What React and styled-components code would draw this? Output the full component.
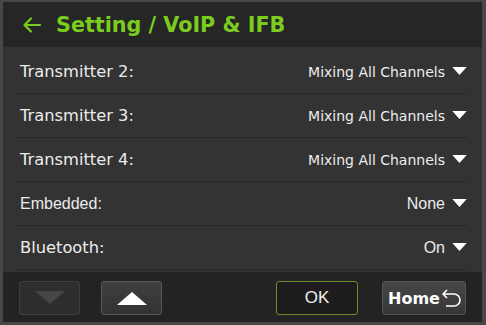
import styled, { createGlobalStyle } from 'styled-components';

const GlobalStyle = createGlobalStyle`
  html, body {
    margin: 0;
    padding: 0;
    background: #444;
  }
`;

const rows = [
  { label: 'Transmitter 2:', value: 'Mixing All Channels', label_kind: 'verdana', value_kind: 'verdana' },
  { label: 'Transmitter 3:', value: 'Mixing All Channels', label_kind: 'verdana', value_kind: 'verdana' },
  { label: 'Transmitter 4:', value: 'Mixing All Channels', label_kind: 'verdana', value_kind: 'verdana' },
  { label: 'Embedded:', value: 'None', label_kind: 'arial', value_kind: 'arial' },
  { label: 'Bluetooth:', value: 'On', label_kind: 'verdana', value_kind: 'arial' },
];

export default function App() {
  return (
    <>
      <GlobalStyle />
      <Screen>
        <Header>
          <BackArrow viewBox="0 0 20 20">
            <path d="M18 10 H3 M9 3.5 L2.5 10 L9 16.5" />
          </BackArrow>
          <Title>Setting / VoIP &amp; IFB</Title>
        </Header>
        <List>
          {rows.map((row) => (
            <Row key={row.label}>
              <Label $kind={row.label_kind}>{row.label}</Label>
              <Value $kind={row.value_kind}>
                {row.value}
                <Caret viewBox="0 0 16 10">
                  <path d="M0 0 H16 L8 9 Z" />
                </Caret>
              </Value>
            </Row>
          ))}
        </List>
        <Footer>
          <ArrowButton $disabled>
            <svg width="30" height="14" viewBox="0 0 30 14">
              <path d="M0 0 H30 L15 13 Z" fill="#464646" />
            </svg>
          </ArrowButton>
          <ArrowButton>
            <svg width="30" height="14" viewBox="0 0 30 14">
              <path d="M0 14 H30 L15 1 Z" fill="#fff" />
            </svg>
          </ArrowButton>
          <Spacer />
          <OkButton>OK</OkButton>
          <HomeButton>
            Home
            <svg width="22" height="20" viewBox="0 0 22 20">
              <path
                d="M6 2 L2 6 L6 10 M2 6 H13 a6 6 0 0 1 0 12 H5"
                fill="none"
                stroke="#fff"
                strokeWidth="1.6"
                strokeLinejoin="round"
              />
            </svg>
          </HomeButton>
        </Footer>
      </Screen>
    </>
  );
}

const fontFor = (kind) =>
  kind === 'arial'
    ? "'Liberation Sans', Arial, sans-serif"
    : "'DejaVu Sans', Verdana, sans-serif";

const Screen = styled.div`
  width: 486px;
  height: 325px;
  box-sizing: border-box;
  padding: 2px 4px 3px 3px;
  background: #474747;
  display: flex;
  flex-direction: column;
  overflow: hidden;
`;

const Header = styled.div`
  height: 45px;
  flex-shrink: 0;
  background: #262626;
  display: flex;
  align-items: center;
  padding-left: 19px;
  gap: 14px;
`;

const BackArrow = styled.svg`
  width: 20px;
  height: 20px;
  fill: none;
  stroke: #7acc1e;
  stroke-width: 2.2;
  stroke-linecap: round;
  stroke-linejoin: round;
`;

const Title = styled.h1`
  margin: 0;
  font-family: 'DejaVu Sans', Verdana, sans-serif;
  font-weight: bold;
  font-size: 20.7px;
  color: #7acc1e;
`;

const List = styled.div`
  flex: 1;
  background: #333;
  padding: 3px 15px 0 15px;
`;

const Row = styled.div`
  height: 43px;
  display: flex;
  align-items: center;
  justify-content: space-between;
  padding-left: 2px;
  border-bottom: 1px solid #262626;
`;

const Label = styled.span`
  font-family: ${(p) => fontFor(p.$kind)};
  font-size: ${(p) => (p.$kind === 'arial' ? '16px' : '16.3px')};
  color: #ececec;
`;

const Value = styled.span`
  display: flex;
  align-items: center;
  gap: 7px;
  font-family: ${(p) => fontFor(p.$kind)};
  font-size: ${(p) => (p.$kind === 'arial' ? '16px' : '14px')};
  color: #ececec;
`;

const Caret = styled.svg`
  width: 15px;
  height: 9px;
  fill: #fff;
`;

const Footer = styled.div`
  height: 50px;
  flex-shrink: 0;
  background: #232323;
  display: flex;
  align-items: center;
  padding: 0 16px 0 16px;
  gap: 21px;
`;

const Spacer = styled.div`
  flex: 1;
`;

const ButtonBase = styled.div`
  height: 34px;
  box-sizing: border-box;
  border-radius: 3px;
  display: flex;
  align-items: center;
  justify-content: center;
  margin-top: 2px;
`;

const ArrowButton = styled(ButtonBase)`
  width: 61px;
  background: ${(p) =>
    p.$disabled ? '#2e2e2e' : 'linear-gradient(#3f3f3f, #333)'};
  border: 1px solid ${(p) => (p.$disabled ? '#3e3e3e' : '#595959')};
`;

const OkButton = styled(ButtonBase)`
  width: 82px;
  background: #1e1c1c;
  border: 1px solid #6c8c2c;
  color: #f0f0f0;
  font-family: 'Liberation Sans', Arial, sans-serif;
  font-size: 17px;
  margin-right: 3px;
`;

const HomeButton = styled(ButtonBase)`
  width: 84px;
  background: linear-gradient(#474747, #363636);
  border: 1px solid #555;
  color: #fff;
  font-family: 'DejaVu Sans', Verdana, sans-serif;
  font-weight: bold;
  font-size: 16px;
  gap: 1px;
  padding-left: 3px;
`;
